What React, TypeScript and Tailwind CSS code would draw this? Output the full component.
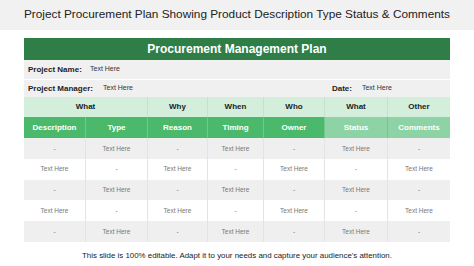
const cols = [
  { w: 'w-[62px]', top: 'What', sub: 'Description', light: false },
  { w: 'w-[62px]', top: '', sub: 'Type', light: false },
  { w: 'w-[60px]', top: 'Why', sub: 'Reason', light: false },
  { w: 'w-[56px]', top: 'When', sub: 'Timing', light: false },
  { w: 'w-[61px]', top: 'Who', sub: 'Owner', light: false },
  { w: 'w-[63px]', top: 'What', sub: 'Status', light: true },
  { w: 'w-[62px]', top: 'Other', sub: 'Comments', light: true },
];

const rows = [0, 1, 2, 3, 4];

export default function App() {
  return (
    <div className="w-[474px] h-[266px] bg-white font-['Liberation_Sans',Arial,sans-serif] flex flex-col">
      {/* Title */}
      <div className="h-[30px] bg-[#f1f1f1] flex items-center justify-center text-[11.8px] text-[#222]">
        Project Procurement Plan Showing Product Description Type Status &amp; Comments
      </div>

      <div className="w-[426px] mx-auto mt-[8px] flex flex-col">
        {/* Green header */}
        <div className="h-[22px] bg-[#2f7d47] flex items-center justify-center text-white font-bold text-[12px]">
          Procurement Management Plan
        </div>

        {/* Project info */}
        <div className="h-[20px] bg-[#f0f0f0] border-b border-white flex items-center px-[4px] text-[8px]">
          <span className="font-bold text-[#222] w-[62px]">Project Name:</span>
          <span className="text-[#333] text-[7px]">Text Here</span>
        </div>
        <div className="h-[17px] bg-[#f0f0f0] flex items-center px-[4px] text-[8px]">
          <span className="font-bold text-[#222] w-[75px]">Project Manager:</span>
          <span className="text-[#333] text-[7px]">Text Here</span>
          <span className="font-bold text-[#222] ml-[199px] w-[30px]">Date:</span>
          <span className="text-[#333] text-[7px]">Text Here</span>
        </div>

        {/* Top header */}
        <div className="h-[20px] bg-[#d3efdc] flex text-[8px] font-bold text-[#222]">
          <div className="w-[124px] flex items-center justify-center border-r border-[#c2e3cc]">What</div>
          {cols.slice(2).map((c, i) => (
            <div
              key={i}
              className={`${c.w} flex items-center justify-center ${i < 4 ? 'border-r border-[#c2e3cc]' : ''}`}
            >
              {c.top}
            </div>
          ))}
        </div>

        {/* Sub header */}
        <div className="h-[21px] flex text-[8px] font-bold text-white">
          {cols.map((c, i) => (
            <div
              key={i}
              className={`${c.w} flex items-center justify-center ${c.light ? 'bg-[#8ed3a6]' : 'bg-[#4bb96b]'} ${i < 6 ? 'border-r border-[#6fc98a]' : ''}`}
            >
              {c.sub}
            </div>
          ))}
        </div>

        {/* Data rows */}
        {rows.map((r) => (
          <div
            key={r}
            className={`h-[20.8px] flex text-[6.5px] text-[#777] ${r % 2 === 0 ? 'bg-[#efefef]' : 'bg-white'}`}
          >
            {cols.map((c, i) => {
              const filled = (i + r) % 2 === 1;
              return (
                <div
                  key={i}
                  className={`${c.w} flex items-center justify-center ${i < 6 ? 'border-r border-[#e4e4e4]' : ''}`}
                >
                  {filled ? 'Text Here' : '-'}
                </div>
              );
            })}
          </div>
        ))}
      </div>

      {/* Footer */}
      <div className="mt-[8px] text-center text-[7.9px] text-[#222]">
        This slide is 100% editable. Adapt it to your needs and capture your audience's attention.
      </div>
    </div>
  );
}
